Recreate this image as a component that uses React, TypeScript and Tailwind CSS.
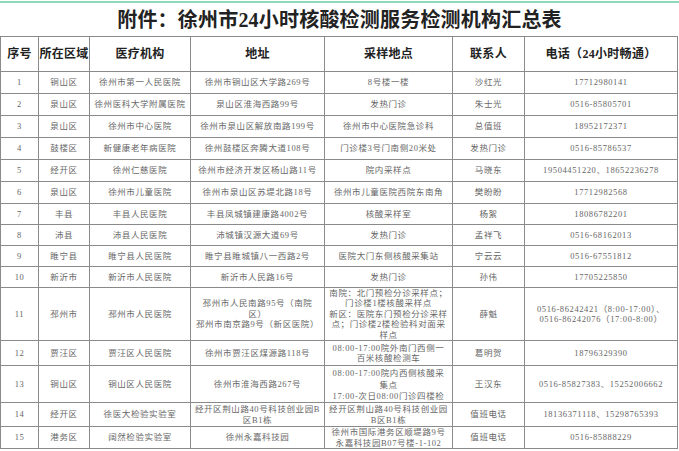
import React from "react";

type Row = {
  no: string;
  area: string;
  org: string;
  addr: string[];
  site: string[];
  contact: string;
  phone: string[];
  h: number;
  siteTop?: boolean;
};

const rows: Row[] = [
  { no: "1", area: "铜山区", org: "徐州市第一人民医院", addr: ["徐州市铜山区大学路269号"], site: ["8号楼一楼"], contact: "沙红光", phone: ["17712980141"], h: 22 },
  { no: "2", area: "泉山区", org: "徐州医科大学附属医院", addr: ["泉山区淮海西路99号"], site: ["发热门诊"], contact: "朱士光", phone: ["0516-85805701"], h: 22 },
  { no: "3", area: "泉山区", org: "徐州市中心医院", addr: ["徐州市泉山区解放南路199号"], site: ["徐州市中心医院急诊科"], contact: "总值班", phone: ["18952172371"], h: 22 },
  { no: "4", area: "鼓楼区", org: "新健康老年病医院", addr: ["徐州鼓楼区奔腾大道108号"], site: ["门诊楼3号门南侧20米处"], contact: "发热门诊", phone: ["0516-85786537"], h: 22 },
  { no: "5", area: "经开区", org: "徐州仁慈医院", addr: ["徐州市经济开发区杨山路11号"], site: ["院内采样点"], contact: "马晓东", phone: ["19504451220、18652236278"], h: 22 },
  { no: "6", area: "泉山区", org: "徐州市儿童医院", addr: ["徐州市泉山区苏堤北路18号"], site: ["徐州市儿童医院西院东南角"], contact: "樊盼盼", phone: ["17712982568"], h: 22 },
  { no: "7", area: "丰县", org: "丰县人民医院", addr: ["丰县凤城镇建康路4002号"], site: ["核酸采样室"], contact: "杨絮", phone: ["18086782201"], h: 21 },
  { no: "8", area: "沛县", org: "沛县人民医院", addr: ["沛城镇汉源大道69号"], site: ["发热门诊"], contact: "孟祥飞", phone: ["0516-68162013"], h: 21 },
  { no: "9", area: "睢宁县", org: "睢宁县人民医院", addr: ["睢宁县睢城镇八一西路2号"], site: ["医院大门东侧核酸采集站"], contact: "宁云云", phone: ["0516-67551812"], h: 21 },
  { no: "10", area: "新沂市", org: "新沂市人民医院", addr: ["新沂市人民路16号"], site: ["发热门诊"], contact: "孙伟", phone: ["17705225850"], h: 21 },
  {
    no: "11", area: "邳州市", org: "邳州市人民医院",
    addr: ["邳州市人民南路95号（南院", "区）", "邳州市南京路9号（新区医院）"],
    site: ["南院：北门预检分诊采样点；", "门诊楼1楼核酸采样点", "新区：医院东门预检分诊采样", "点；门诊楼2楼检验科对面采", "样点"],
    contact: "薛魁",
    phone: ["0516-86242421（8:00-17:00）、", "0516-86242076（17:00-8:00）"],
    h: 53,
  },
  { no: "12", area: "贾汪区", org: "贾汪区人民医院", addr: ["徐州市贾汪区煤源路118号"], site: ["08:00-17:00院外南门西侧一", "百米核酸检测车"], contact: "葛明贺", phone: ["18796329390"], h: 25 },
  {
    no: "13", area: "铜山区", org: "铜山区人民医院", addr: ["徐州市淮海西路267号"],
    site: ["08:00-17:00院内西侧核酸采", "集点", "17:00-次日08:00门诊四楼检", "验科"],
    contact: "王汉东", phone: ["0516-85827383、15252006662"], h: 37, siteTop: true,
  },
  { no: "14", area: "经开区", org: "徐医大检验实验室", addr: ["经开区荆山路40号科技创业园B", "区B1栋"], site: ["经开区荆山路40号科技创业园", "B区B1栋"], contact: "值班电话", phone: ["18136371118、15298765393"], h: 24 },
  { no: "15", area: "港务区", org: "阔然检验实验室", addr: ["徐州永嘉科技园"], site: ["徐州市国际港务区顺堤路9号", "永嘉科技园B07号楼-1-102"], contact: "值班电话", phone: ["0516-85888229"], h: 22 },
];

function Cell({ lines, h, top }: { lines: string[]; h: number; top?: boolean }) {
  return (
    <td className="border border-[#8a8a8a] p-0 align-middle">
      <div
        className={
          top
            ? "flex flex-col items-center justify-start overflow-hidden pt-[2px] leading-[11.5px]"
            : "flex flex-col items-center justify-center overflow-hidden leading-[10.5px]"
        }
        style={{ height: h - 1 }}
      >
        {lines.map((l, i) => (
          <span key={i} className="whitespace-nowrap">
            {l}
          </span>
        ))}
      </div>
    </td>
  );
}

const font = { fontFamily: '"Liberation Serif", "Noto Sans CJK SC", serif' };

export default function App() {
  return (
    <div className="w-[679px] h-[451px] bg-white overflow-hidden" style={font}>
      <div className="h-[2px] mt-[1px] bg-[#8fd9bd]" />
      <div className="h-[33px] flex items-center justify-center text-[20px] font-bold text-[#222] tracking-[0.2px] pt-[1px]">
        附件：徐州市24小时核酸检测服务检测机构汇总表
      </div>
      <table className="table-fixed border-collapse w-[677px]">
        <colgroup>
          <col className="w-[38px]" />
          <col className="w-[51px]" />
          <col className="w-[101px]" />
          <col className="w-[134px]" />
          <col className="w-[128px]" />
          <col className="w-[72px]" />
          <col className="w-[153px]" />
        </colgroup>
        <thead>
          <tr className="text-[12px] font-bold text-[#222]">
            {["序号", "所在区域", "医疗机构", "地址", "采样地点", "联系人", "电话（24小时畅通）"].map((t) => (
              <th key={t} className="border border-[#8a8a8a] p-0 font-bold">
                <div className="h-[34px] flex items-center justify-center whitespace-nowrap tracking-[0.3px]">{t}</div>
              </th>
            ))}
          </tr>
        </thead>
        <tbody className="text-[8.5px] text-[#666] tracking-[0.6px]">
          {rows.map((r) => (
            <tr key={r.no}>
              <Cell lines={[r.no]} h={r.h} />
              <Cell lines={[r.area]} h={r.h} />
              <Cell lines={[r.org]} h={r.h} />
              <Cell lines={r.addr} h={r.h} />
              <Cell lines={r.site} h={r.h} top={r.siteTop} />
              <Cell lines={[r.contact]} h={r.h} />
              <Cell lines={r.phone} h={r.h} />
            </tr>
          ))}
        </tbody>
      </table>
    </div>
  );
}
